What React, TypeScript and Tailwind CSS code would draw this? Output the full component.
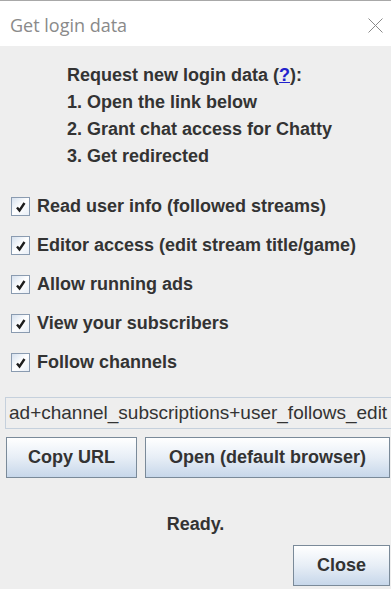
import React from 'react';

const perms = [
  'Read user info (followed streams)',
  'Editor access (edit stream title/game)',
  'Allow running ads',
  'View your subscribers',
  'Follow channels',
];

const CheckBox = () => (
  <span className="flex h-[19px] w-[19px] shrink-0 items-center justify-center border border-[#8a9bb0] bg-gradient-to-br from-[#d6e1ee] via-[#ffffff] to-[#e8eef6]">
    <svg width="13" height="13" viewBox="0 0 13 13">
      <path d="M3 7.5 L5.5 10.5 L10.5 3" fill="none" stroke="#1d1d1d" strokeWidth="2.4" />
    </svg>
  </span>
);

const JButton = ({ children, className }: { children: React.ReactNode; className: string }) => (
  <button className={`flex items-center justify-center border border-[#7a8a99] bg-gradient-to-b from-[#ffffff] via-[#e7eef6] to-[#c7d7ea] text-[18px] font-bold text-[#333] ${className}`}>
    {children}
  </button>
);

export default function App() {
  return (
    <div className="flex h-[589px] w-[391px] flex-col overflow-hidden bg-[#eeeeee] font-['Liberation_Sans',Arial,sans-serif]">
      {/* title bar */}
      <div className="flex h-[46px] shrink-0 items-center justify-between border-t border-[#a8a8a8] bg-white pl-[10px] pr-[8px] pt-[3px]">
        <span className="font-['Open_Sans',sans-serif] text-[18px] text-[#8a8a8a]">Get login data</span>
        <svg width="15" height="15" viewBox="0 0 15 15">
          <path d="M0.5 0.5 L14.5 14.5 M14.5 0.5 L0.5 14.5" stroke="#8a8a8a" strokeWidth="1" />
        </svg>
      </div>

      <div className="flex flex-col pl-[67px] pt-[16px] text-[18px] font-bold leading-[27px] text-[#333]">
        <div>
          Request new login data (<span className="text-[#2222cc] underline">?</span>):
        </div>
        <div>1. Open the link below</div>
        <div>2. Grant chat access for Chatty</div>
        <div>3. Get redirected</div>
      </div>

      <div className="mt-[17px] flex flex-col pl-[11px]">
        {perms.map((p) => (
          <div key={p} className="flex h-[39px] items-center gap-[7px] text-[18px] font-bold text-[#333]">
            <CheckBox />
            <span>{p}</span>
          </div>
        ))}
      </div>

      <div className="ml-[5px] mt-[15px] flex h-[32px] w-[400px] shrink-0 items-center overflow-hidden border border-[#c5d0dc] bg-[#eeeeee] pl-[3px] text-[19px] whitespace-nowrap text-[#333]">
        ad+channel_subscriptions+user_follows_edit
      </div>

      <div className="mt-[8px] flex gap-[8px] pl-[6px] pr-[1px]">
        <JButton className="h-[41px] w-[131px]">Copy URL</JButton>
        <JButton className="h-[41px] flex-1">Open (default browser)</JButton>
      </div>

      <div className="mt-[33px] text-center text-[18px] font-bold text-[#333]">Ready.</div>

      <div className="mt-[7px] flex justify-end pr-[1px]">
        <JButton className="h-[41px] w-[97px]">Close</JButton>
      </div>
    </div>
  );
}
